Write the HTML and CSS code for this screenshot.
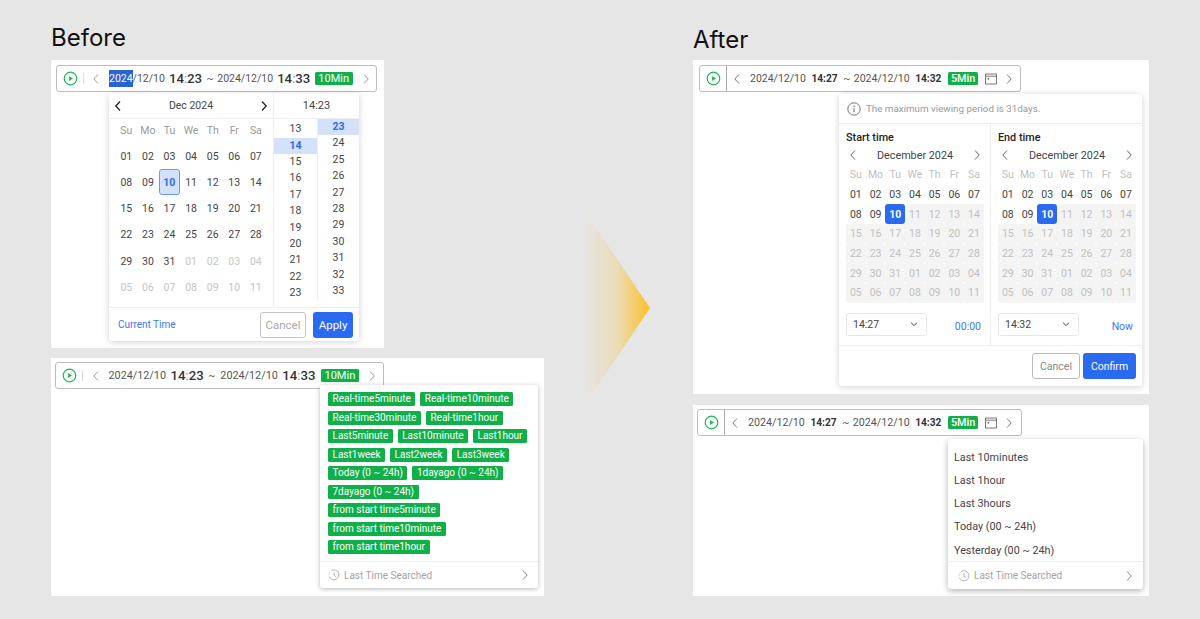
FILE: index.html
```html
<!DOCTYPE html>
<html lang="en">
<head>
  <meta charset="UTF-8">
  <title>Time picker | Before and after</title>
  <link rel="stylesheet" href="styles.css">
</head>
<body>
<svg class="defs" width="0" height="0">
  <symbol id="play" viewBox="0 0 16 16"><circle cx="8" cy="8" r="6.7" fill="none" stroke="#1cb854" stroke-width="1.3"/><path d="M6.5 5.4 10.6 8l-4.1 2.6z" fill="#1cb854"/></symbol>
  <symbol id="left" viewBox="0 0 10 12"><path d="M7 1.5 2.8 6 7 10.5" fill="none" stroke="currentColor"/></symbol>
  <symbol id="right" viewBox="0 0 10 12"><path d="M3 1.5 7.2 6 3 10.5" fill="none" stroke="currentColor"/></symbol>
  <symbol id="down" viewBox="0 0 10 10"><path d="M2 3.8 5 6.4 8 3.8" fill="none" stroke="currentColor" stroke-width="1"/></symbol>
  <symbol id="cal" viewBox="0 0 12 12"><path d="M.5 1h11v10H.5zM.5 3.2h11" fill="none" stroke="#666" stroke-width=".9"/><rect x="2.6" y="5" width="1.6" height="1.6" fill="#666"/></symbol>
  <symbol id="clock" viewBox="0 0 12 12"><path d="M3.2 1.6A5 5 0 1 1 1.3 7.6" fill="none" stroke="#aaa" stroke-width=".9"/><path d="M1 5.6l.1-1M1.6 3.6l.5-.8" stroke="#aaa" stroke-width=".9"/><path d="M6 3.2V6.2L7.8 7.6" fill="none" stroke="#aaa" stroke-width=".9"/></symbol>
  <symbol id="info" viewBox="0 0 14 14"><circle cx="7" cy="7" r="6.2" fill="none" stroke="#777" stroke-width="1"/><path d="M7 6.2v4" stroke="#777" stroke-width="1.2"/><circle cx="7" cy="4.2" r=".8" fill="#777"/></symbol>
</svg>

<div class="slide">
  <section class="col col-before">
    <h1 class="title">Before</h1>

    <div class="panel panel-1">
      <div class="bar bar-old bar-1">
        <svg class="ic-play"><use href="#play"/></svg>
        <i class="sep"></i>
        <svg class="ic-nav"><use href="#left"/></svg>
        <span class="date"><mark class="sel">2024</mark>/12/10</span>
        <b class="time">14<u>:</u>23</b>
        <span class="tilde">~</span>
        <span class="date">2024/12/10</span>
        <b class="time">14<u>:</u>33</b>
        <span class="badge">10Min</span>
        <svg class="ic-nav ic-end"><use href="#right"/></svg>
      </div>

      <div class="pop pop-old">
        <div class="old-top">
          <div class="old-cal">
            <div class="old-head">
              <svg class="ic-head"><use href="#left"/></svg>
              <span>Dec 2024</span>
              <svg class="ic-head"><use href="#right"/></svg>
            </div>
            <div class="old-grid">
              <span class="dow">Su</span><span class="dow">Mo</span><span class="dow">Tu</span><span class="dow">We</span><span class="dow">Th</span><span class="dow">Fr</span><span class="dow">Sa</span>
              <span>01</span><span>02</span><span>03</span><span>04</span><span>05</span><span>06</span><span>07</span>
              <span>08</span><span>09</span><span class="today">10</span><span>11</span><span>12</span><span>13</span><span>14</span>
              <span>15</span><span>16</span><span>17</span><span>18</span><span>19</span><span>20</span><span>21</span>
              <span>22</span><span>23</span><span>24</span><span>25</span><span>26</span><span>27</span><span>28</span>
              <span>29</span><span>30</span><span>31</span><span class="off">01</span><span class="off">02</span><span class="off">03</span><span class="off">04</span>
              <span class="off">05</span><span class="off">06</span><span class="off">07</span><span class="off">08</span><span class="off">09</span><span class="off">10</span><span class="off">11</span>
            </div>
          </div>
          <div class="old-time">
            <div class="old-head old-head-time">14:23</div>
            <div class="lists">
              <div class="list list-h">
                <span>13</span><span class="on">14</span><span>15</span><span>16</span><span>17</span><span>18</span><span>19</span><span>20</span><span>21</span><span>22</span><span>23</span>
              </div>
              <div class="list list-m">
                <span class="on">23</span><span>24</span><span>25</span><span>26</span><span>27</span><span>28</span><span>29</span><span>30</span><span>31</span><span>32</span><span>33</span>
              </div>
            </div>
          </div>
        </div>
        <div class="old-foot">
          <a class="link">Current Time</a>
          <button class="btn btn-old-cancel">Cancel</button>
          <button class="btn btn-old-apply">Apply</button>
        </div>
      </div>
    </div>

    <div class="panel panel-2">
      <div class="bar bar-old bar-2">
        <svg class="ic-play"><use href="#play"/></svg>
        <i class="sep"></i>
        <svg class="ic-nav"><use href="#left"/></svg>
        <span class="date">2024/12/10</span>
        <b class="time">14<u>:</u>23</b>
        <span class="tilde">~</span>
        <span class="date">2024/12/10</span>
        <b class="time">14<u>:</u>33</b>
        <span class="badge">10Min</span>
        <svg class="ic-nav ic-end"><use href="#right"/></svg>
      </div>

      <div class="pop pop-tags">
        <div class="tags">
          <span>Real-time5minute</span><span>Real-time10minute</span>
          <span>Real-time30minute</span><span>Real-time1hour</span>
          <span>Last5minute</span><span>Last10minute</span><span>Last1hour</span>
          <span>Last1week</span><span>Last2week</span><span>Last3week</span>
          <span>Today (0 ~ 24h)</span><span>1dayago (0 ~ 24h)</span>
          <span>7dayago (0 ~ 24h)</span>
          <span>from start time5minute</span>
          <span>from start time10minute</span>
          <span>from start time1hour</span>
        </div>
        <div class="recent recent-tags">
          <svg class="ic-clock"><use href="#clock"/></svg>
          <span>Last Time Searched</span>
          <svg class="ic-more"><use href="#right"/></svg>
        </div>
      </div>
    </div>
  </section>

  <div class="arrow"></div>

  <section class="col col-after">
    <h1 class="title title-after">After</h1>

    <div class="panel panel-3">
      <div class="bar bar-new bar-3">
        <span class="play-box"><svg class="ic-play"><use href="#play"/></svg></span>
        <svg class="ic-nav"><use href="#left"/></svg>
        <span class="date">2024/12/10</span>
        <b class="time-b">14:27</b>
        <span class="tilde">~</span>
        <span class="date">2024/12/10</span>
        <b class="time-b">14:32</b>
        <span class="badge badge-b">5Min</span>
        <svg class="ic-cal"><use href="#cal"/></svg>
        <svg class="ic-nav"><use href="#right"/></svg>
      </div>

      <div class="pop pop-new">
        <div class="notice">
          <svg class="ic-info"><use href="#info"/></svg>
          <span>The maximum viewing period is 31days.</span>
        </div>
        <div class="ranges">
          <div class="range">
            <h2 class="range-title">Start time</h2>
            <div class="month">
              <svg class="ic-month"><use href="#left"/></svg>
              <span>December 2024</span>
              <svg class="ic-month"><use href="#right"/></svg>
            </div>
            <div class="new-grid">
              <span class="dow">Su</span><span class="dow">Mo</span><span class="dow">Tu</span><span class="dow">We</span><span class="dow">Th</span><span class="dow">Fr</span><span class="dow">Sa</span>
              <span>01</span><span>02</span><span>03</span><span>04</span><span>05</span><span>06</span><span>07</span>
              <span>08</span><span>09</span><span class="pick">10</span><span class="dis">11</span><span class="dis">12</span><span class="dis">13</span><span class="dis">14</span>
              <span class="dis">15</span><span class="dis">16</span><span class="dis">17</span><span class="dis">18</span><span class="dis">19</span><span class="dis">20</span><span class="dis">21</span>
              <span class="dis">22</span><span class="dis">23</span><span class="dis">24</span><span class="dis">25</span><span class="dis">26</span><span class="dis">27</span><span class="dis">28</span>
              <span class="dis">29</span><span class="dis">30</span><span class="dis">31</span><span class="dis">01</span><span class="dis">02</span><span class="dis">03</span><span class="dis">04</span>
              <span class="dis">05</span><span class="dis">06</span><span class="dis">07</span><span class="dis">08</span><span class="dis">09</span><span class="dis">10</span><span class="dis">11</span>
            </div>
            <div class="time-row">
              <div class="select"><span>14:27</span><svg class="ic-down"><use href="#down"/></svg></div>
              <a class="link">00:00</a>
            </div>
          </div>
          <div class="range range-end">
            <h2 class="range-title">End time</h2>
            <div class="month">
              <svg class="ic-month"><use href="#left"/></svg>
              <span>December 2024</span>
              <svg class="ic-month"><use href="#right"/></svg>
            </div>
            <div class="new-grid">
              <span class="dow">Su</span><span class="dow">Mo</span><span class="dow">Tu</span><span class="dow">We</span><span class="dow">Th</span><span class="dow">Fr</span><span class="dow">Sa</span>
              <span>01</span><span>02</span><span>03</span><span>04</span><span>05</span><span>06</span><span>07</span>
              <span>08</span><span>09</span><span class="pick">10</span><span class="dis">11</span><span class="dis">12</span><span class="dis">13</span><span class="dis">14</span>
              <span class="dis">15</span><span class="dis">16</span><span class="dis">17</span><span class="dis">18</span><span class="dis">19</span><span class="dis">20</span><span class="dis">21</span>
              <span class="dis">22</span><span class="dis">23</span><span class="dis">24</span><span class="dis">25</span><span class="dis">26</span><span class="dis">27</span><span class="dis">28</span>
              <span class="dis">29</span><span class="dis">30</span><span class="dis">31</span><span class="dis">01</span><span class="dis">02</span><span class="dis">03</span><span class="dis">04</span>
              <span class="dis">05</span><span class="dis">06</span><span class="dis">07</span><span class="dis">08</span><span class="dis">09</span><span class="dis">10</span><span class="dis">11</span>
            </div>
            <div class="time-row">
              <div class="select"><span>14:32</span><svg class="ic-down"><use href="#down"/></svg></div>
              <a class="link">Now</a>
            </div>
          </div>
        </div>
        <div class="new-foot">
          <button class="btn btn-cancel">Cancel</button>
          <button class="btn btn-confirm">Confirm</button>
        </div>
      </div>
    </div>

    <div class="panel panel-4">
      <div class="bar bar-new bar-4">
        <span class="play-box"><svg class="ic-play"><use href="#play"/></svg></span>
        <svg class="ic-nav"><use href="#left"/></svg>
        <span class="date">2024/12/10</span>
        <b class="time-b">14:27</b>
        <span class="tilde">~</span>
        <span class="date">2024/12/10</span>
        <b class="time-b">14:32</b>
        <span class="badge badge-b">5Min</span>
        <svg class="ic-cal"><use href="#cal"/></svg>
        <svg class="ic-nav"><use href="#right"/></svg>
      </div>

      <div class="pop pop-menu">
        <ul class="menu">
          <li>Last 10minutes</li>
          <li>Last 1hour</li>
          <li>Last 3hours</li>
          <li>Today (00 ~ 24h)</li>
          <li>Yesterday (00 ~ 24h)</li>
        </ul>
        <div class="recent recent-menu">
          <svg class="ic-clock"><use href="#clock"/></svg>
          <span>Last Time Searched</span>
          <svg class="ic-more"><use href="#right"/></svg>
        </div>
      </div>
    </div>
  </section>
</div>
</body>
</html>
```

FILE: styles.css
```css
* {
  box-sizing: border-box;
}

body {
  margin: 0;
  background-color: #e6e6e6;
  color: #444;
  font-family: Roboto, "Liberation Sans", sans-serif;
  font-size: 11px;
  overflow: hidden;
}

svg {
  stroke-width: 1;
}

.defs {
  display: block;
}

.slide {
  display: flex;
  height: 619px;
  padding-left: 51px;
}

.col-before {
  width: 493px;
}

.col-after {
  width: 456px;
  margin-left: 43px;
}

.title {
  margin: 22px 0 6px;
  font-family: Inter, sans-serif;
  font-size: 24px;
  font-weight: 400;
  line-height: 32px;
  color: #111;
}

.title-after {
  margin: 24px 0 4px;
}

.arrow {
  width: 66px;
  height: 196px;
  margin: 210px 0 0 40px;
  background: linear-gradient(to right, rgba(250, 190, 40, 0), rgba(250, 190, 40, 0.25) 50%, #fbbf2b);
  clip-path: polygon(0 0, 100% 50%, 0 100%);
}

/* panels */
.panel {
  position: relative;
  background-color: #fff;
}

.panel-1 {
  width: 333px;
  height: 288px;
  padding: 5px;
}

.panel-2 {
  width: 493px;
  height: 238px;
  margin-top: 10px;
  padding: 4px;
}

.panel-3 {
  height: 334px;
  padding: 5px 6px;
}

.panel-4 {
  height: 191px;
  margin-top: 11px;
  padding: 4px;
}

/* toolbar */
.bar {
  display: flex;
  align-items: center;
  height: 27px;
  border: 1px solid #bdbdbd;
  border-radius: 3px;
  font-size: 10.5px;
  color: #555;
}

.bar-1 {
  width: 321px;
}

.bar-2 {
  width: 329px;
}

.bar-3 {
  width: 322px;
}

.bar-4 {
  width: 325px;
}

.ic-play {
  width: 15px;
  height: 15px;
  flex: none;
}

.bar-old .ic-play {
  margin-left: 5.5px;
}

.sep {
  width: 1px;
  height: 11px;
  margin: 0 7px 0 5.5px;
  background-color: #ddd;
}

.bar-2 .sep {
  margin-right: 7.5px;
}

.ic-nav {
  width: 10px;
  height: 12px;
  flex: none;
  color: #999;
}

.bar-old .ic-nav:not(.ic-end) {
  margin-right: 8px;
}

.bar-old .ic-end {
  margin-left: 8px;
}

.date {
  white-space: nowrap;
}

mark.sel {
  padding: 2px 0;
  background-color: #2a63d8;
  color: #fff;
}

.time {
  margin: 0 4.5px 0 4px;
  font-size: 13.2px;
  font-weight: 500;
  color: #333;
}

.time u {
  color: #888;
  text-decoration: none;
  font-weight: 400;
}

.tilde {
  margin: 0 3.5px 0 0;
}

.badge {
  padding: 0 3.5px;
  height: 13px;
  line-height: 13px;
  border-radius: 1.5px;
  background-color: #0fb04a;
  color: #fff;
  font-size: 11px;
  white-space: nowrap;
}

.bar-2 .date {
  font-size: 10.8px;
}

.bar-2 .time {
  margin: 0 4.5px;
}

.bar-2 .tilde {
  margin-right: 5px;
}

.bar-2 .badge {
  margin-left: 1px;
}

.play-box {
  display: flex;
  flex: none;
  align-items: center;
  justify-content: center;
  width: 27px;
  height: 100%;
  margin-right: 5px;
  border-right: 1px solid #aaa;
}

.bar-new .ic-nav {
  margin-right: 8px;
  color: #777;
}

.bar-new .ic-nav:last-child {
  margin-right: 0;
}

.time-b {
  margin: 0 5.5px;
  font-size: 10.2px;
  font-weight: 700;
  color: #333;
}

.badge-b {
  margin-left: 1px;
  padding: 0 3px;
  font-weight: 500;
  font-size: 10.8px;
}

.ic-cal {
  width: 12px;
  height: 12px;
  flex: none;
  margin: 0 7px;
}

.bar-4 .date {
  font-size: 10.7px;
}

/* popovers */
.pop {
  position: absolute;
  background-color: #fff;
  border-radius: 3px;
  box-shadow: 0 1px 7px rgba(0, 0, 0, 0.18);
}

.pop-old {
  left: 58px;
  top: 33px;
  width: 250px;
  height: 248px;
}

.old-top {
  display: flex;
  height: 215px;
  border-bottom: 1px solid #eee;
}

.old-cal {
  width: 165px;
  border-right: 1px solid #eee;
}

.old-head {
  display: flex;
  align-items: center;
  justify-content: space-between;
  height: 26px;
  padding: 0 4px;
  border-bottom: 1px solid #eee;
  font-size: 10.5px;
}

.old-head-time {
  justify-content: center;
  font-size: 11px;
}

.ic-head {
  width: 10px;
  height: 12px;
  color: #222;
  stroke-width: 1.3;
}

.old-grid {
  display: grid;
  grid-template-columns: repeat(7, 21.6px);
  grid-auto-rows: 26.2px;
  margin: -2px 0 0 6.5px;
  font-size: 10.5px;
}

.old-grid span {
  display: flex;
  align-items: center;
  justify-content: center;
}

.old-grid .dow {
  color: #999;
}

.old-grid .off {
  color: #c4c4c4;
}

.old-grid .today {
  width: 21px;
  height: 26px;
  border: 1px solid #6a97f0;
  border-radius: 3px;
  background-color: #d3e1fb;
  color: #2a6af0;
  font-weight: 700;
}

.old-time {
  width: 85px;
}

.lists {
  display: flex;
}

.list {
  height: 182px;
  font-size: 10.5px;
}

.list span {
  display: block;
  height: 16.4px;
  line-height: 16.4px;
  text-align: center;
}

.list .on {
  background-color: #d3e1fb;
  color: #2a6af0;
  font-weight: 700;
}

.list-h {
  width: 44px;
  padding-top: 2.2px;
  border-right: 1px solid #eee;
}

.list-m {
  flex: 1;
}

.old-foot {
  display: flex;
  align-items: center;
  height: 33px;
  padding: 0 6px 0 9px;
}

.link {
  color: #3d78ef;
}

.old-foot .link {
  margin-right: auto;
  font-size: 10px;
}

.btn {
  font-family: inherit;
  padding: 0;
  border-radius: 3px;
}

.btn-old-cancel {
  width: 46px;
  height: 26px;
  margin-right: 7px;
  border: 1px solid #c4c4c4;
  background-color: #fff;
  color: #aaa;
  font-size: 11.5px;
}

.btn-old-apply {
  width: 40px;
  height: 26px;
  border: 0;
  background-color: #2a6af0;
  color: #fff;
  font-size: 11.5px;
}

/* tag list */
.pop-tags {
  left: 269px;
  top: 27px;
  width: 218px;
  height: 203px;
  box-shadow: 0 1px 5px rgba(0, 0, 0, 0.28);
}

.tags {
  display: flex;
  flex-wrap: wrap;
  align-content: flex-start;
  column-gap: 5px;
  row-gap: 4.5px;
  height: 177px;
  padding: 7px 8px 0;
  border-bottom: 1px solid #eee;
}

.tags span {
  height: 14px;
  padding: 0 4.5px;
  border-radius: 1.5px;
  background-color: #0fb04a;
  color: #fff;
  font-size: 10px;
  line-height: 14px;
  white-space: nowrap;
}

.recent {
  display: flex;
  align-items: center;
  color: #a3a3a3;
  font-size: 10px;
}

.recent-tags {
  height: 26px;
  padding: 0 8px;
}

.recent-menu {
  height: 27px;
  padding: 0 9px 0 10px;
}

.ic-clock {
  width: 12px;
  height: 12px;
  margin-right: 4px;
  flex: none;
}

.ic-more {
  width: 10px;
  height: 12px;
  margin-left: auto;
  color: #888;
}

/* new popover */
.pop-new {
  left: 146px;
  top: 34px;
  width: 303px;
  height: 292px;
}

.notice {
  display: flex;
  align-items: center;
  height: 30px;
  padding-left: 8px;
  border-bottom: 1px solid #eee;
  color: #999;
  font-size: 9.8px;
}

.ic-info {
  width: 14px;
  height: 14px;
  margin-right: 5px;
}

.ranges {
  display: flex;
  height: 222px;
  border-bottom: 1px solid #eee;
}

.range {
  width: 152px;
  padding: 7px 6px 0 7px;
  border-right: 1px solid #eee;
}

.range-end {
  width: 151px;
  border-right: 0;
}

.range-title {
  margin: 0;
  font-size: 10.8px;
  font-weight: 500;
  line-height: 13px;
  color: #222;
}

.month {
  display: flex;
  align-items: center;
  justify-content: space-between;
  height: 22px;
  padding: 0 2px;
  font-size: 10.8px;
}

.ic-month {
  width: 10px;
  height: 12px;
  color: #666;
}

.new-grid {
  display: grid;
  grid-template-columns: repeat(7, 19.7px);
  grid-auto-rows: 19.7px;
  margin-top: -1px;
  font-size: 10.5px;
}

.new-grid span {
  display: flex;
  align-items: center;
  justify-content: center;
}

.new-grid .dow {
  color: #c0c0c0;
}

.new-grid .dis {
  border-radius: 2px;
  background-color: #f4f4f4;
  color: #c0c0c0;
}

.new-grid .pick {
  border-radius: 3px;
  background-color: #2a6af0;
  color: #fff;
  font-weight: 700;
}

.time-row {
  display: flex;
  align-items: center;
  justify-content: space-between;
  margin-top: 10px;
  padding-right: 3px;
}

.time-row .link {
  margin-top: 4px;
  font-size: 10.5px;
}

.select {
  display: flex;
  align-items: center;
  justify-content: space-between;
  width: 81px;
  height: 23px;
  padding: 0 7px 0 6px;
  border: 1px solid #e6e6e6;
  border-radius: 3px;
  font-size: 10.5px;
}

.ic-down {
  width: 10px;
  height: 10px;
  color: #555;
}

.new-foot {
  display: flex;
  justify-content: flex-end;
  gap: 3px;
  padding: 7px 6px 0 0;
}

.btn-cancel {
  width: 48px;
  height: 26px;
  border: 1px solid #bbb;
  background-color: #fff;
  color: #888;
  font-size: 10.5px;
}

.btn-confirm {
  width: 53px;
  height: 26px;
  border: 0;
  background-color: #2a6af0;
  color: #fff;
  font-size: 10.5px;
}

/* quick menu */
.pop-menu {
  left: 255px;
  top: 34px;
  width: 195px;
  height: 150px;
  box-shadow: 0 2px 6px rgba(0, 0, 0, 0.3);
}

.menu {
  height: 123px;
  margin: 0;
  padding: 6.5px 0 0 6px;
  border-bottom: 1px solid #eee;
  list-style: none;
  font-size: 10.8px;
}

.menu li {
  height: 23.3px;
  line-height: 23.3px;
}
```
